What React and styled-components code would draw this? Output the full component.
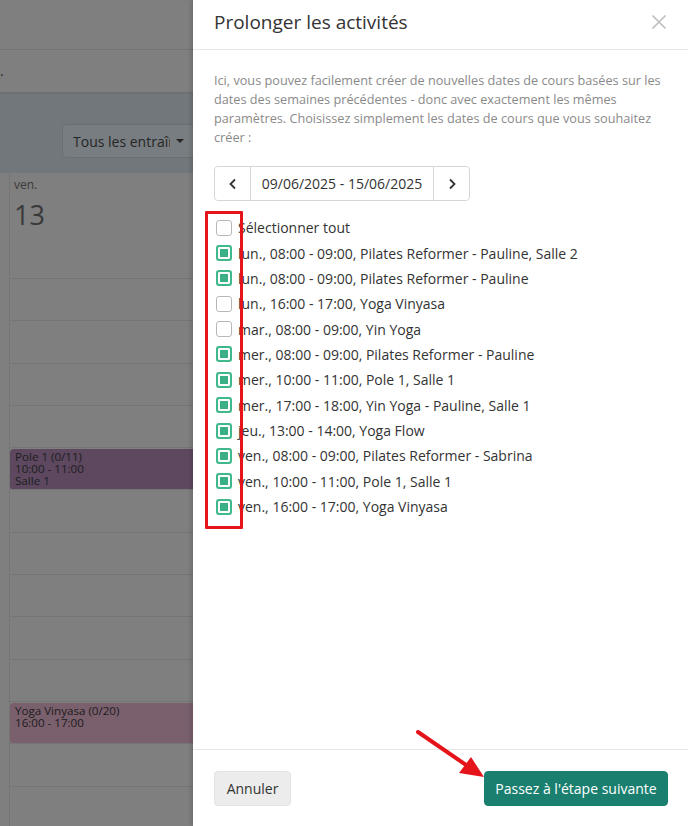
import React from "react";
import styled, { createGlobalStyle } from "styled-components";

const GlobalStyle = createGlobalStyle`
  html, body {
    margin: 0;
    padding: 0;
    height: 100%;
    overflow: hidden;
  }
  body {
    font-family: "Open Sans", "Noto Sans", sans-serif;
    color: #333;
    background: #7f7f7f;
  }
`;

const Page = styled.div`
  display: flex;
  width: 688px;
  height: 826px;
  overflow: hidden;
  position: relative;
`;

/* ---------- dimmed calendar behind the drawer ---------- */

const Backdrop = styled.div`
  width: 193px;
  flex-shrink: 0;
  display: flex;
  flex-direction: column;
  background: #7f7f7f;
  overflow: hidden;
`;

const TopBar = styled.div`
  height: 49px;
  border-bottom: 1px solid #747474;
  flex-shrink: 0;
`;

const SubBar = styled.div`
  height: 42px;
  border-bottom: 2px solid #6e7174;
  flex-shrink: 0;
  display: flex;
  align-items: center;
  font-size: 14px;
  color: #2a2a2a;
  line-height: 1;
`;

const FilterBand = styled.div`
  height: 79px;
  flex-shrink: 0;
  background: #72777b;
  display: flex;
  align-items: flex-end;
  justify-content: flex-end;
  padding-bottom: 15px;
  box-sizing: border-box;
`;

const FilterSelect = styled.div`
  width: 132px;
  height: 34px;
  box-sizing: border-box;
  margin-right: -1px;
  background: #787d81;
  border: 1px solid #6a6f73;
  border-radius: 4px 0 0 4px;
  display: flex;
  align-items: center;
  padding-left: 10px;
  gap: 6px;
  font-size: 14px;
  color: #262626;
`;

const FilterLabel = styled.span`
  width: 97px;
  overflow: hidden;
  white-space: nowrap;
`;

const Caret = styled.span`
  width: 0;
  height: 0;
  border-left: 4px solid transparent;
  border-right: 4px solid transparent;
  border-top: 4px solid #262626;
`;

const CalendarBody = styled.div`
  flex: 1;
  display: flex;
`;

const Gutter = styled.div`
  width: 9px;
  flex-shrink: 0;
`;

const DayColumn = styled.div`
  flex: 1;
  border-left: 1px solid #757575;
  display: flex;
  flex-direction: column;
`;

const DayHeader = styled.div`
  height: 105px;
  flex-shrink: 0;
  padding: 4px 0 0 4px;
  box-sizing: border-box;
  color: #3a3a3a;
`;

const DayName = styled.div`
  font-size: 12px;
  line-height: 16px;
`;

const DayNumber = styled.div`
  font-size: 27px;
  line-height: 34px;
  margin-top: 5px;
`;

const Slot = styled.div`
  height: 42.3px;
  flex-shrink: 0;
  border-top: 1px solid #757575;
  box-sizing: border-box;
  padding-top: 1px;
`;

const EventCard = styled.div`
  height: 41px;
  box-sizing: border-box;
  background: ${(p) => p.$tone};
  border-radius: 4px 0 0 4px;
  padding: 2px 5px;
  font-size: 11.6px;
  line-height: 12px;
  color: #1c1c1c;
  white-space: nowrap;
`;

/* ---------- drawer ---------- */

const Drawer = styled.div`
  flex: 1;
  background: #fff;
  display: flex;
  flex-direction: column;
  box-shadow: -2px 0 4px rgba(0, 0, 0, 0.15);
  position: relative;
`;

const DrawerHeader = styled.div`
  height: 50px;
  flex-shrink: 0;
  box-sizing: border-box;
  border-bottom: 1px solid #e8e8e8;
  display: flex;
  align-items: center;
  justify-content: space-between;
  padding: 0 21px 6px 21px;
`;

const Title = styled.h2`
  margin: 0;
  font-size: 19px;
  font-weight: 400;
  color: #333;
`;

const CloseButton = styled.button`
  background: none;
  border: none;
  padding: 0;
  width: 16px;
  height: 16px;
  display: flex;
  cursor: pointer;
`;

const DrawerBody = styled.div`
  flex: 1;
  padding: 21px 21px 0 21px;
`;

const Intro = styled.p`
  margin: 0;
  font-size: 12.7px;
  line-height: 19px;
  color: #8a8a8a;
`;

const WeekPicker = styled.div`
  display: inline-flex;
  margin-top: 19px;
  height: 35px;
  border: 1px solid #d6d6d6;
  border-radius: 4px;
  box-sizing: border-box;
`;

const PickerArrow = styled.button`
  width: 35px;
  background: #fff;
  border: none;
  border-radius: 4px;
  display: flex;
  align-items: center;
  justify-content: center;
  padding: 0;
  cursor: pointer;
`;

const PickerRange = styled.div`
  width: 182px;
  border-left: 1px solid #d6d6d6;
  border-right: 1px solid #d6d6d6;
  display: flex;
  align-items: center;
  justify-content: center;
  font-size: 14px;
  color: #333;
`;

const ActivityList = styled.ul`
  list-style: none;
  margin: 14px 0 0 0;
  padding: 0;
  display: flex;
  flex-direction: column;
`;

const ActivityRow = styled.li`
  height: 25.36px;
  display: flex;
  align-items: center;
  gap: 6px;
  padding-left: 2px;
  font-size: 14px;
  color: #333;
  white-space: nowrap;
`;

const Check = styled.span`
  width: 16px;
  height: 16px;
  box-sizing: border-box;
  border-radius: 3px;
  flex-shrink: 0;
  border: ${(p) => (p.$checked ? "2px solid #3fb88b" : "1.5px solid #b8b8b8")};
  background: ${(p) => (p.$checked ? "#3ab084" : "#fff")};
  box-shadow: ${(p) => (p.$checked ? "inset 0 0 0 2px #fff" : "none")};
`;

const Highlight = styled.div`
  position: absolute;
  left: 12px;
  top: 211px;
  width: 38px;
  height: 318px;
  box-sizing: border-box;
  border: 3px solid #e5141b;
  border-radius: 1px;
  pointer-events: none;
`;

const DrawerFooter = styled.div`
  flex-shrink: 0;
  height: 77px;
  box-sizing: border-box;
  border-top: 1px solid #e8e8e8;
  display: flex;
  align-items: flex-start;
  justify-content: space-between;
  padding: 21px 20px 0 21px;
`;

const Button = styled.button`
  height: 35px;
  border-radius: 4px;
  font-family: inherit;
  font-size: 14px;
  padding: 0;
  white-space: nowrap;
  cursor: pointer;
  border: 1px solid ${(p) => (p.$primary ? "#1a7f6e" : "#e2e2e2")};
  background: ${(p) => (p.$primary ? "#1b7f6f" : "#ececec")};
  color: ${(p) => (p.$primary ? "#fff" : "#333")};
  width: ${(p) => p.$width}px;
`;

const Arrow = styled.svg`
  position: absolute;
  left: 220px;
  top: 725px;
  pointer-events: none;
`;

const activities = [
  { label: "Sélectionner tout", checked: false },
  { label: "lun., 08:00 - 09:00, Pilates Reformer - Pauline, Salle 2", checked: true },
  { label: "lun., 08:00 - 09:00, Pilates Reformer - Pauline", checked: true },
  { label: "lun., 16:00 - 17:00, Yoga Vinyasa", checked: false },
  { label: "mar., 08:00 - 09:00, Yin Yoga", checked: false },
  { label: "mer., 08:00 - 09:00, Pilates Reformer - Pauline", checked: true },
  { label: "mer., 10:00 - 11:00, Pole 1, Salle 1", checked: true },
  { label: "mer., 17:00 - 18:00, Yin Yoga - Pauline, Salle 1", checked: true },
  { label: "jeu., 13:00 - 14:00, Yoga Flow", checked: true },
  { label: "ven., 08:00 - 09:00, Pilates Reformer - Sabrina", checked: true },
  { label: "ven., 10:00 - 11:00, Pole 1, Salle 1", checked: true },
  { label: "ven., 16:00 - 17:00, Yoga Vinyasa", checked: true },
];

const events = {
  4: { tone: "#5d4860", lines: ["Pole 1 (0/11)", "10:00 - 11:00", "Salle 1"] },
  10: { tone: "#7a5f6d", lines: ["Yoga Vinyasa (0/20)", "16:00 - 17:00"] },
};

function Chevron({ dir }) {
  return (
    <svg width="10" height="12" viewBox="0 0 10 12">
      <path
        d={dir === "left" ? "M7 1.5 L2.5 6 L7 10.5" : "M3 1.5 L7.5 6 L3 10.5"}
        fill="none"
        stroke="#333"
        strokeWidth="1.8"
      />
    </svg>
  );
}

export default function App() {
  return (
    <>
      <GlobalStyle />
      <Page>
        <Backdrop>
          <TopBar />
          <SubBar>.</SubBar>
          <FilterBand>
            <FilterSelect>
              <FilterLabel>Tous les entraîneurs</FilterLabel>
              <Caret />
            </FilterSelect>
          </FilterBand>
          <CalendarBody>
            <Gutter />
            <DayColumn>
              <DayHeader>
                <DayName>ven.</DayName>
                <DayNumber>13</DayNumber>
              </DayHeader>
              {Array.from({ length: 13 }).map((_, i) => (
                <Slot key={i}>
                  {events[i] && (
                    <EventCard $tone={events[i].tone}>
                      {events[i].lines.map((l) => (
                        <div key={l}>{l}</div>
                      ))}
                    </EventCard>
                  )}
                </Slot>
              ))}
            </DayColumn>
          </CalendarBody>
        </Backdrop>

        <Drawer>
          <DrawerHeader>
            <Title>Prolonger les activités</Title>
            <CloseButton aria-label="Fermer">
              <svg width="16" height="16" viewBox="0 0 16 16">
                <path d="M1.5 1.5 L14.5 14.5 M14.5 1.5 L1.5 14.5" stroke="#bdbdbd" strokeWidth="1.6" />
              </svg>
            </CloseButton>
          </DrawerHeader>

          <DrawerBody>
            <Intro>
              Ici, vous pouvez facilement créer de nouvelles dates de cours basées sur les
              dates des semaines précédentes - donc avec exactement les mêmes paramètres.
              Choisissez simplement les dates de cours que vous souhaitez créer :
            </Intro>

            <WeekPicker>
              <PickerArrow aria-label="Semaine précédente">
                <Chevron dir="left" />
              </PickerArrow>
              <PickerRange>09/06/2025 - 15/06/2025</PickerRange>
              <PickerArrow aria-label="Semaine suivante">
                <Chevron dir="right" />
              </PickerArrow>
            </WeekPicker>

            <ActivityList>
              {activities.map((a) => (
                <ActivityRow key={a.label}>
                  <Check $checked={a.checked} />
                  {a.label}
                </ActivityRow>
              ))}
            </ActivityList>
          </DrawerBody>

          <DrawerFooter>
            <Button $width={77}>Annuler</Button>
            <Button $primary $width={184}>Passez à l'étape suivante</Button>
          </DrawerFooter>

          <Highlight />
          <Arrow width="80" height="60" viewBox="0 0 80 60">
            <line x1="5" y1="7" x2="56" y2="42" stroke="#e5141b" strokeWidth="4" strokeLinecap="round" />
            <polygon points="71,52 46,48 58,32" fill="#e5141b" />
          </Arrow>
        </Drawer>
      </Page>
    </>
  );
}
